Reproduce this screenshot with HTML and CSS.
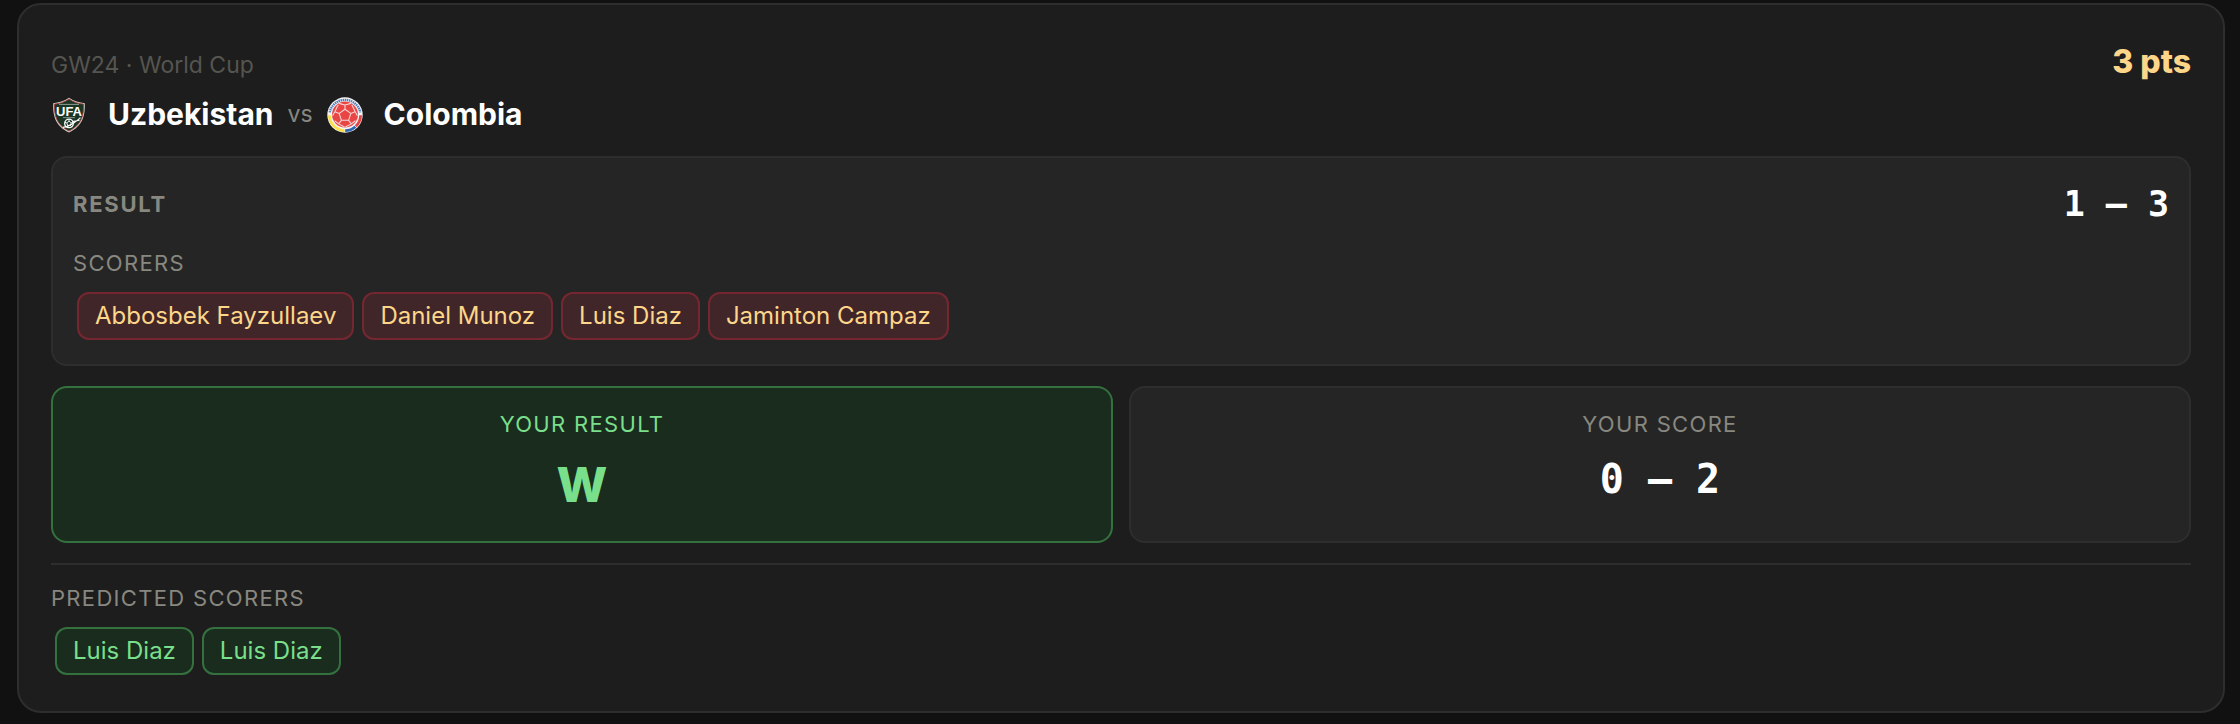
FILE: index.html
```html
<!DOCTYPE html>
<html lang="en">
<head>
    <meta charset="UTF-8">
    <meta name="viewport" content="width=device-width, initial-scale=1.0">
    <title>Prediction - Uzbekistan vs Colombia</title>
    <link rel="stylesheet" href="styles.css">
</head>
<body>
    <article class="match-card">
        <header class="match-header">
            <span class="gameweek">GW24 · World Cup</span>
            <span class="points">3 pts</span>
        </header>
        <h2 class="teams">
            <svg class="crest" viewBox="0 0 36 36" role="img" aria-label="Uzbekistan crest">
                <path d="M18 0.8 C13 4.2 8 5.8 2.2 6.2 C1.8 18 4 29 18 35.4 C32 29 34.2 18 33.8 6.2 C28 5.8 23 4.2 18 0.8Z" fill="#d9d6cf"/>
                <path d="M18 2 C13 5.3 8.6 6.7 3.4 7.1 C3.1 18 5.2 28 18 34.1 C30.8 28 32.9 18 32.6 7.1 C27.4 6.7 23 5.3 18 2Z" fill="#1a3525" stroke="#a8433f" stroke-width="0.9"/>
                <path d="M8 7.4H28" stroke="#8d9c91" stroke-width="1"/>
                <text class="crest-text" x="18" y="19" text-anchor="middle">UFA</text>
                <path d="M12 20.6H24" stroke="#8d9c91" stroke-width="0.9"/>
                <circle cx="18" cy="26.4" r="4.3" fill="#1a3525" stroke="#fff" stroke-width="1.3"/>
                <path d="M18 24.2l2.2 1.6-.8 2.6h-2.8l-.8-2.6zM18 24.2v-2M20.2 25.8l2-.6M19.4 28.4l1.4 1.8M16.6 28.4l-1.4 1.8M15.8 25.8l-2-.6" fill="none" stroke="#fff" stroke-width="0.9"/>
                <path d="M12 30.4C19 29.5 23 26 29.5 20.8M21.5 24.5l7-1.3" fill="none" stroke="#fff" stroke-width="1.1"/>
            </svg>
            <span>Uzbekistan</span>
            <span class="versus">vs</span>
            <svg class="crest" viewBox="0 0 36 36" role="img" aria-label="Colombia crest">
                <circle cx="18" cy="18" r="17.7" fill="#f5f3f3"/>
                <path d="M2.7 15.4A15.6 15.6 0 0 1 33.3 15.4" fill="none" stroke="#4d7fc0" stroke-width="2.3" stroke-dasharray="1.5 0.6"/>
                <path d="M2.4 18.2A15.6 15.6 0 0 0 17.6 33.6" fill="none" stroke="#fae04b" stroke-width="2.8"/>
                <path d="M18.2 33.6A15.6 15.6 0 0 0 28.4 29.7" fill="none" stroke="#2f66b2" stroke-width="2.8"/>
                <path d="M28.8 29.3A15.6 15.6 0 0 0 33.6 18.2" fill="none" stroke="#e54545" stroke-width="2.8"/>
                <circle cx="18" cy="17.6" r="13" fill="#e84545"/>
                <path d="M18 12.2l5.8 4.2-2.2 6.9h-7.2l-2.2-6.9zM18 12.2V8M23.8 16.4l4.4-1.6M21.6 23.3l2.8 3.6M14.4 23.3l-2.8 3.6M12.2 16.4l-4.4-1.6M12 6.4L18 8l6-1.6M24.8 7.8l3.4 7 2.2 4M28.4 23.8l-4 3.1-6 3M7.6 23.8l4 3.1 6 3M11.2 7.8l-3.4 7-2.2 4" fill="none" stroke="#f7d5d5" stroke-width="1.1"/>
            </svg>
            <span>Colombia</span>
        </h2>

        <section class="result-box">
            <div class="result-row">
                <h3 class="label label-strong">Result</h3>
                <span class="final-score">1 – 3</span>
            </div>
            <h4 class="label">Scorers</h4>
            <ul class="chips">
                <li class="chip chip-missed">Abbosbek Fayzullaev</li>
                <li class="chip chip-missed">Daniel Munoz</li>
                <li class="chip chip-missed">Luis Diaz</li>
                <li class="chip chip-missed">Jaminton Campaz</li>
            </ul>
        </section>

        <div class="picks">
            <section class="pick pick-correct">
                <h3 class="label">Your Result</h3>
                <p class="pick-result">W</p>
            </section>
            <section class="pick">
                <h3 class="label">Your Score</h3>
                <p class="pick-score">0 – 2</p>
            </section>
        </div>

        <section class="predicted">
            <h3 class="label">Predicted Scorers</h3>
            <ul class="chips">
                <li class="chip chip-correct">Luis Diaz</li>
                <li class="chip chip-correct">Luis Diaz</li>
            </ul>
        </section>
    </article>
</body>
</html>
```
FILE: styles.css
```css
* {
    box-sizing: border-box;
    margin: 0;
    padding: 0;
}

body {
    font-family: Inter, "Liberation Sans", sans-serif;
    font-size: 24px;
    line-height: 1.5;
    background: #111111;
    color: #ffffff;
    padding: 3px 15px 0 17px;
}

.match-card {
    background: #1d1d1d;
    border: 2px solid #2e2e2e;
    border-radius: 24px;
    padding: 32px;
}

.match-header {
    display: flex;
    justify-content: space-between;
    align-items: baseline;
    padding-top: 1px;
}

.gameweek {
    font-size: 23px;
    color: #555550;
}

.points {
    font-size: 32px;
    font-weight: 800;
    color: #fdd68a;
}

.teams {
    display: flex;
    align-items: center;
    font-size: 30px;
    font-weight: 700;
    margin: 6px 0 19px;
}

.crest {
    width: 36px;
    height: 36px;
    margin-right: 21px;
}

.crest-text {
    font-family: "Liberation Sans Narrow", "Liberation Sans", sans-serif;
    font-size: 13px;
    font-weight: 700;
    fill: #ffffff;
}

.versus {
    font-size: 23px;
    font-weight: 400;
    color: #888880;
    margin: 0 14px;
}

.result-box,
.pick {
    background: #252525;
    border: 2px solid #2e2e2e;
    border-radius: 16px;
    padding: 20px;
}

.result-row {
    display: flex;
    justify-content: space-between;
    align-items: center;
    margin-bottom: 16px;
}

.label {
    font-size: 22px;
    font-weight: 400;
    letter-spacing: 0.06em;
    text-transform: uppercase;
    color: #888880;
}

.label-strong {
    font-weight: 700;
    letter-spacing: 0.08em;
}

.final-score,
.pick-score {
    font-family: "DejaVu Sans Mono", monospace;
    font-weight: 700;
}

.final-score {
    font-size: 35px;
}

.chips {
    display: flex;
    flex-wrap: wrap;
    list-style: none;
    margin-top: 8px;
}

.chip {
    font-size: 24px;
    padding: 4px 16px;
    margin: 4px;
    border: 2px solid;
    border-radius: 12px;
}

.chip-missed {
    background: #412629;
    border-color: #752731;
    color: #fdd68a;
}

.chip-correct {
    background: #192c1e;
    border-color: #35713f;
    color: #7adf8b;
}

.picks {
    display: grid;
    grid-template-columns: 1fr 1fr;
    gap: 16px;
    margin: 20px 0;
}

.pick {
    text-align: center;
}

.pick-correct {
    background: #192c1e;
    border-color: #35713f;
}

.pick-correct .label {
    color: #7adf8b;
}

.pick-result {
    font-size: 48px;
    font-weight: 800;
    color: #7adf8b;
    margin-top: 8px;
}

.pick-score {
    font-size: 40px;
    margin-top: 8px;
}

.predicted {
    border-top: 2px solid #2e2e2e;
    padding-top: 17px;
}
```
